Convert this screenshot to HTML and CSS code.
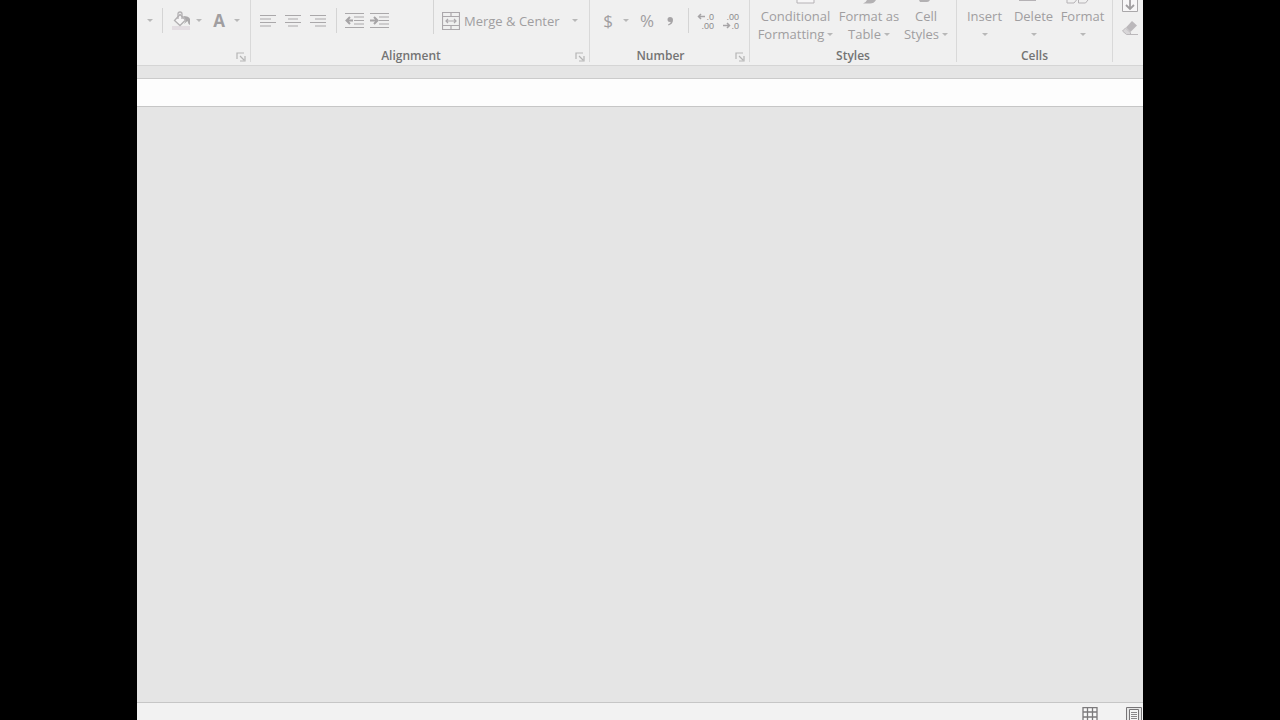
FILE: index.html
```html
<!DOCTYPE html>
<html lang="en">
<head>
<meta charset="utf-8">
<title>Spreadsheet</title>
<link rel="stylesheet" href="styles.css">
</head>
<body>
<main class="app">
  <div class="ribbon">
    <section class="group" aria-label="Font">
      <div class="tools font-tools">
        <button class="arrow" aria-label="Border options"></button>
        <span class="sep"></span>
        <button class="tool" aria-label="Fill color">
          <svg width="20" height="20" viewBox="0 0 20 20"><path d="M1 15h18v4H1z" fill="#e3dde2"/><path d="M9 3.500 14.500 9 9 14.500 3.500 9.500z" fill="#f5f4f5" stroke="#b2b0b2" stroke-width="1.300"/><path d="M7 8V3q0-2 2-2t2 2v5" fill="none" stroke="#b2b0b2" stroke-width="1.300"/><path d="M12 5q6 0 7 3v6q-2-1-2.500-4L13 13l2-4z" fill="#aaa8aa"/></svg>
        </button>
        <button class="arrow" aria-label="Fill color options"></button>
        <button class="tool letter" aria-label="Font color">A</button>
        <button class="arrow" aria-label="Font color options"></button>
      </div>
      <div class="caption"><button class="launcher" aria-label="Font settings"><svg width="10" height="10" viewBox="0 0 10 10"><path d="M1 7V1h7M4 4l4 4M9 4v5H4" fill="none" stroke="#b5b5b5" stroke-width="1.200"/></svg></button></div>
    </section>

    <section class="group" aria-label="Alignment">
      <div class="tools align-tools">
        <button class="wide" aria-label="Align left"><svg width="18" height="16" viewBox="0 0 18 16"><path d="M1 2.500h16M1 6h11M1 9.500h16M1 13h11" class="line"/></svg></button>
        <button class="wide" aria-label="Center"><svg width="18" height="16" viewBox="0 0 18 16"><path d="M1 2.500h16M4 6h10M1 9.500h16M4 13h10" class="line"/></svg></button>
        <button class="wide" aria-label="Align right"><svg width="18" height="16" viewBox="0 0 18 16"><path d="M1 2.500h16M6 6h11M1 9.500h16M6 13h11" class="line"/></svg></button>
        <span class="sep"></span>
        <button class="wide" aria-label="Decrease indent"><svg width="19" height="18" viewBox="0 0 19 18"><path d="M0 1.500h19M9 5h10M9 8.500h10M9 12h10M0 15.500h19" class="line"/><path d="M8 8.500H2M5 5 1.500 8.500 5 12" class="bold-line"/></svg></button>
        <button class="wide" aria-label="Increase indent"><svg width="19" height="18" viewBox="0 0 19 18"><path d="M0 1.500h19M9 5h10M9 8.500h10M9 12h10M0 15.500h19" class="line"/><path d="M0 8.500h6M4 5 7.500 8.500 4 12" class="bold-line"/></svg></button>
        <span class="sep tall"></span>
        <button class="merge"><svg width="18" height="18" viewBox="0 0 18 18"><path d="M.5.500h17v17H.5zM.5 4.500h17M.5 13.500h17M9 .5v4M9 13.500v4M4 9h10M6 7 4 9l2 2M12 7l2 2-2 2" fill="none" stroke="#aca8ac" stroke-width="1.200"/></svg>Merge &amp; Center</button>
        <button class="arrow" aria-label="Merge options"></button>
      </div>
      <div class="caption with-launcher">Alignment<button class="launcher" aria-label="Alignment settings"><svg width="10" height="10" viewBox="0 0 10 10"><path d="M1 7V1h7M4 4l4 4M9 4v5H4" fill="none" stroke="#b5b5b5" stroke-width="1.200"/></svg></button></div>
    </section>

    <section class="group" aria-label="Number">
      <div class="tools number-tools">
        <button class="tool symbol" aria-label="Accounting format">$</button>
        <button class="arrow" aria-label="Currency options"></button>
        <button class="tool symbol" aria-label="Percent style">%</button>
        <button class="tool" aria-label="Comma style"><svg width="8" height="10" viewBox="0 0 8 10"><path d="M4 1a2.500 2.500 0 1 0 0 5q.5 0 1-.3Q4.500 7.500 2 8.500l.5 1Q7 8 7 4 7 1 4 1z" fill="#a6a4a6"/></svg></button>
        <span class="sep"></span>
        <button class="wide" aria-label="Increase decimal"><svg width="18" height="20" viewBox="0 0 18 20"><text x="17" y="9" class="digits">.0</text><text x="17" y="18" class="digits">.00</text><path d="M8 5.500H2M4 3 1.500 5.500 4 8" class="small-line"/></svg></button>
        <button class="wide" aria-label="Decrease decimal"><svg width="18" height="20" viewBox="0 0 18 20"><text x="17" y="9" class="digits">.00</text><text x="17" y="18" class="digits">.0</text><path d="M1 14.500h6M5 12 7.500 14.500 5 17" class="small-line"/></svg></button>
      </div>
      <div class="caption with-launcher">Number<button class="launcher" aria-label="Number settings"><svg width="10" height="10" viewBox="0 0 10 10"><path d="M1 7V1h7M4 4l4 4M9 4v5H4" fill="none" stroke="#b5b5b5" stroke-width="1.200"/></svg></button></div>
    </section>

    <section class="group" aria-label="Styles">
      <div class="big-tools styles-tools">
        <button class="big"><svg width="40" height="7" viewBox="0 0 40 7"><path d="M21 0v3h17V0" fill="#f7f6f7" stroke="#b5b2b5"/></svg><span>Conditional</span><span>Formatting<i class="tri"></i></span></button>
        <button class="big"><svg width="20" height="7" viewBox="0 0 20 7"><path d="M8 0h9q-2 3.500-6 3.500H4q3-1 4-3.500z" fill="#b3b1b3"/></svg><span>Format as</span><span>Table<i class="tri"></i></span></button>
        <button class="big"><svg width="20" height="7" viewBox="0 0 20 7"><path d="M3 0h11q-1 2-3 2H4z" fill="#b3b1b3"/></svg><span>Cell</span><span>Styles<i class="tri"></i></span></button>
      </div>
      <div class="caption">Styles</div>
    </section>

    <section class="group" aria-label="Cells">
      <div class="big-tools cells-tools">
        <button class="big"><svg width="40" height="7"></svg><span>Insert</span><span><i class="tri"></i></span></button>
        <button class="big"><svg width="40" height="7" viewBox="0 0 40 7"><path d="M5 .5h17" stroke="#b5b2b5"/></svg><span>Delete</span><span><i class="tri"></i></span></button>
        <button class="big"><svg width="40" height="7" viewBox="0 0 40 7"><path d="M4 0v3h7l2.500-3M15.500 0v3h7L25 0" fill="none" stroke="#b5b2b5"/></svg><span>Format</span><span><i class="tri"></i></span></button>
      </div>
      <div class="caption">Cells</div>
    </section>

    <section class="group edit-tools" aria-label="Editing">
      <button class="edit" aria-label="Fill"><svg width="18" height="13" viewBox="0 0 18 13"><path d="M1.500 0v11.500h15V0" fill="#f7f6f7" stroke="#aaa8aa"/><path d="M9 0v9M5 5l4 4 4-4" fill="none" stroke="#a09ea0" stroke-width="1.800"/></svg></button>
      <button class="edit" aria-label="Clear"><svg width="18" height="17" viewBox="0 0 18 17"><path d="M11 0l5 4.500-6.500 6.500L5 6.500z" fill="#bbb8bb"/><path d="M4.500 7 1.500 10l4 3.500h3.500l.8-1.500z" fill="#d8d6d8" stroke="#bbb8bb"/><path d="M6 13.500h11" stroke="#bbb8bb"/></svg></button>
    </section>
  </div>
  <div class="gutter"></div>
  <input class="formula" aria-label="Formula bar">
  <div class="canvas"></div>
  <footer class="status">
    <button class="view" aria-label="Normal view"><svg width="16" height="15" viewBox="0 0 16 15"><path d="M1 .5h14v14H1zM1 5h14M1 10h14M5.500.500v14M10.500.500v14" fill="#fafafa" stroke="#7c7a7c" stroke-width="1.300"/></svg></button>
    <button class="view" aria-label="Page layout view"><svg width="16" height="15" viewBox="0 0 16 15"><path d="M.5 15V.5h15V15" fill="#e6e6e6" stroke="#777577"/><path d="M3.500 2.500h9v11h-9z" fill="#f5f5f5" stroke="#777577"/><path d="M5 5.500h6M5 7.500h6M5 9.500h6M5 11.500h6" stroke="#8a888a"/></svg></button>
  </footer>
</main>
</body>
</html>
```
FILE: styles.css
```css
* { box-sizing: border-box; }
body {
  margin: 0;
  padding: 0 137px;
  background: #000;
  font: 13px/18px "Open Sans", "Noto Sans", sans-serif;
  color: #a09ea0;
}
button {
  display: flex;
  align-items: center;
  justify-content: center;
  margin: 0;
  padding: 0;
  border: 0;
  background: none;
  font: inherit;
  color: inherit;
}
svg { display: block; flex: none; }
.app {
  display: flex;
  flex-direction: column;
  min-height: 100vh;
  background: #e5e5e5;
}
.ribbon {
  display: grid;
  grid-template-columns: 114fr 339fr 160fr 207fr 156fr 30fr;
  padding-bottom: 3px;
  background: #f0f0f0;
  border-bottom: 1px solid #d5d5d5;
}
.group {
  display: flex;
  flex-direction: column;
  height: 62px;
  min-width: 0;
  border-right: 1px solid #d9d9d9;
}
.tools {
  display: flex;
  align-items: center;
  height: 41px;
  margin-bottom: 9px;
}
.font-tools { padding-left: 8px; }
.align-tools { padding-left: 4px; }
.number-tools { padding-left: 8px; }
.arrow { width: 10px; height: 20px; }
.arrow::before, .tri {
  content: "";
  border: 3px solid transparent;
  border-top-color: #b8b8b8;
  border-bottom: 0;
}
.tool { width: 20px; height: 22px; }
.wide { width: 25px; height: 22px; }
.sep { width: 1px; height: 25px; background: #d4d4d4; }
.font-tools .sep { margin: 0 8px 0 7px; }
.font-tools .tool + .arrow { margin: 0 5px 0 3px; }
.letter { font-size: 17px; font-weight: 700; }
.align-tools .sep { margin: 0 5px 0 6px; }
.align-tools .tall { align-self: flex-start; height: 34px; margin: 0 8px 0 41px; }
.merge { gap: 4px; white-space: nowrap; margin-right: 10px; }
.symbol { font-size: 17px; }
.number-tools .arrow { margin: 0 6px 0 3px; }
.number-tools .symbol + .tool { margin-left: 3px; }
.number-tools .sep { margin: 0 4px 0 8px; }
.line { fill: none; stroke: #aaa8aa; }
.bold-line { fill: none; stroke: #a6a4a6; stroke-width: 2; }
.small-line { fill: none; stroke: #a6a4a6; stroke-width: 1.500; }
.digits { font: 9px "Liberation Sans", Arial, sans-serif; fill: #8e8c8e; text-anchor: end; }
.caption {
  position: relative;
  text-align: center;
  font-size: 12px;
  font-weight: 600;
  line-height: 12px;
  min-height: 12px;
  color: #747474;
}
.with-launcher { padding-right: 18px; }
.launcher { position: absolute; right: 4px; top: 2px; }
.big-tools {
  display: grid;
  justify-content: start;
  height: 50px;
}
.styles-tools { grid-template-columns: 81px 66px 48px; padding-left: 5px; }
.cells-tools { grid-template-columns: 49px 49px 49px; padding-left: 3px; }
.big {
  flex-direction: column;
  justify-content: flex-start;
  white-space: nowrap;
}
.big span { display: flex; align-items: center; gap: 3px; height: 18px; }
.edit-tools { padding-left: 8px; gap: 8px; border-right: 0; }
.edit { justify-content: flex-start; }
.gutter { height: 12px; }
.formula {
  width: 100%;
  height: 29px;
  padding: 0 8px;
  border: 0;
  border-top: 1px solid #cbcbcb;
  border-bottom: 1px solid #c6c6c6;
  background: #fdfdfd;
  font: inherit;
}
.canvas { flex: 1; }
.status {
  display: flex;
  justify-content: flex-end;
  gap: 28px;
  height: 18px;
  padding: 4px 1px 0 0;
  overflow: hidden;
  align-items: flex-start;
  background: #f2f2f2;
  border-top: 1px solid #c6c6c6;
}
```
